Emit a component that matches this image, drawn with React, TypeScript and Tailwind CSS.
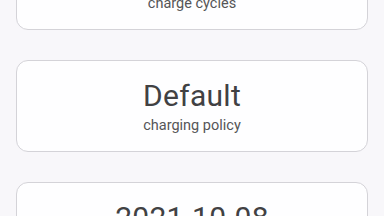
const stats = [
  { value: "1,204", label: "charge cycles" },
  { value: "Default", label: "charging policy" },
  { value: "2021.10.08", label: "manufacture date" },
];

function StatCard({ value, label }: { value: string; label: string }) {
  return (
    <div className="flex flex-col items-center rounded-xl border border-[#d4d3d8] bg-[#fefeff] pt-[17px] pb-[16px]">
      <span className="text-[30px] leading-[36px] tracking-[0.3px] text-[#414143]">{value}</span>
      <span className="mt-[2px] text-[14.5px] leading-[19px] text-[#555557]">{label}</span>
    </div>
  );
}

export default function App() {
  return (
    <div className="h-[216px] overflow-hidden bg-[#f8f7fa] px-4 font-['Roboto',sans-serif]">
      <div className="-mt-[62px] flex flex-col gap-[30px]">
        {stats.map((s) => (
          <StatCard key={s.label} value={s.value} label={s.label} />
        ))}
      </div>
    </div>
  );
}
